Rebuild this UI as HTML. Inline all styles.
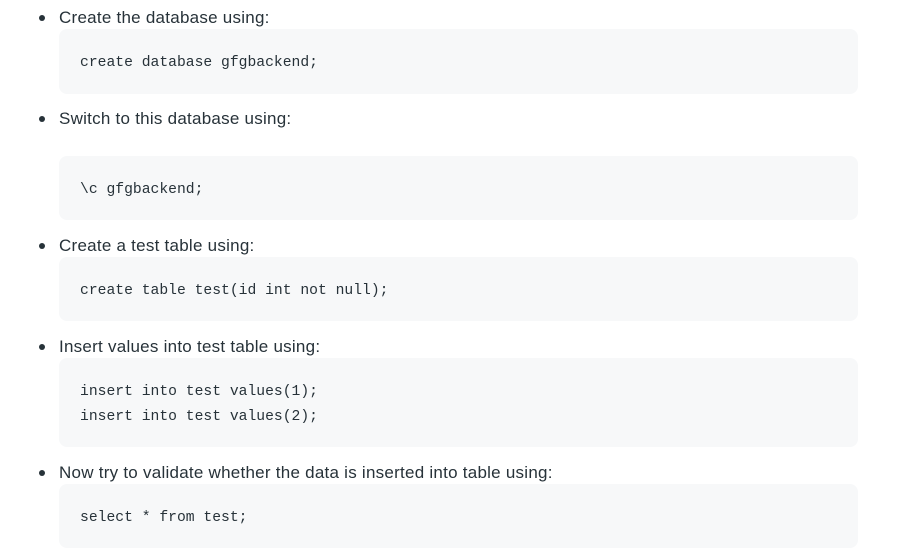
<!DOCTYPE html>
<html><head><style>
body{margin:0;background:#fff;width:919px;height:554px;position:relative;overflow:hidden;font-family:"Liberation Sans",sans-serif;}
.t{position:absolute;left:59px;font-size:17px;letter-spacing:0.25px;color:#273239;line-height:20px;}
.d{position:absolute;left:39px;width:6px;height:6px;border-radius:50%;background:#273239;}
.b{position:absolute;left:59px;width:799px;background:#f7f8f9;border-radius:8px;}
.c{position:absolute;left:80px;font-family:"Liberation Mono",monospace;font-size:14.7px;color:#273239;line-height:25px;white-space:pre;}
</style></head><body>
<div class="d" style="top:15px"></div><div class="t" style="top:8px">Create the database using:</div>
<div class="b" style="top:29px;height:65px"></div><div class="c" style="top:51px">create database gfgbackend;</div>

<div class="d" style="top:116px"></div><div class="t" style="top:109px">Switch to this database using:</div>
<div class="b" style="top:156px;height:64px"></div><div class="c" style="top:178px">\c gfgbackend;</div>

<div class="d" style="top:243px"></div><div class="t" style="top:236px">Create a test table using:</div>
<div class="b" style="top:257px;height:64px"></div><div class="c" style="top:279px">create table test(id int not null);</div>

<div class="d" style="top:344px"></div><div class="t" style="top:337px">Insert values into test table using:</div>
<div class="b" style="top:358px;height:89px"></div><div class="c" style="top:380px">insert into test values(1);
insert into test values(2);</div>

<div class="d" style="top:470px"></div><div class="t" style="top:463px">Now try to validate whether the data is inserted into table using:</div>
<div class="b" style="top:484px;height:64px"></div><div class="c" style="top:506px">select * from test;</div>
</body></html>
